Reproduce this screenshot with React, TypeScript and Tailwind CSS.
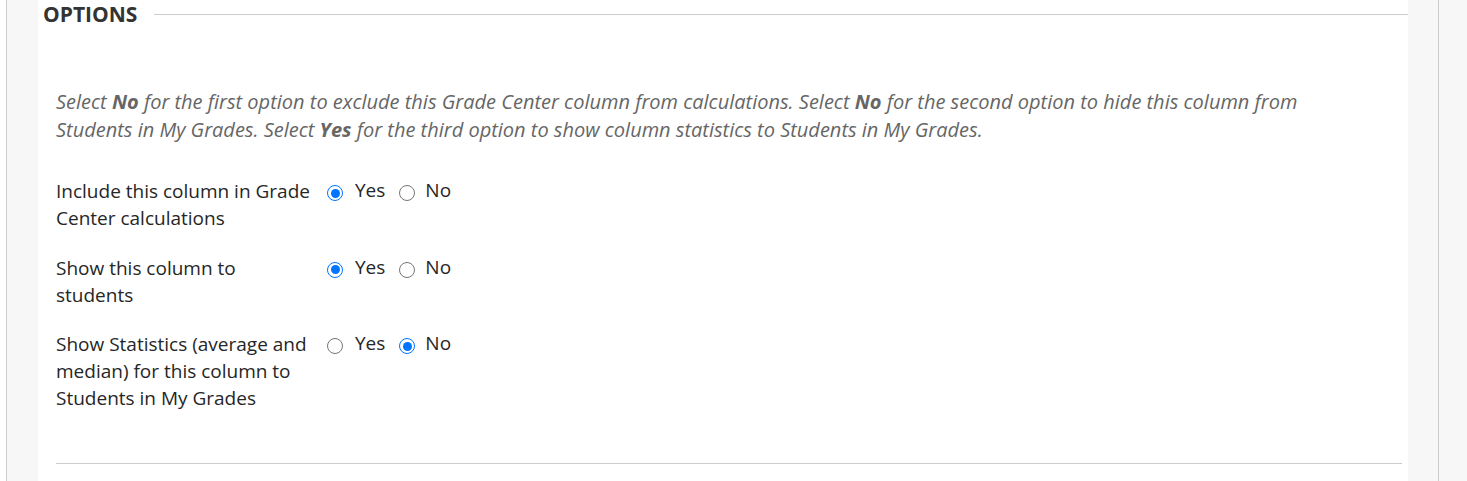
import React from "react";

const Radio = ({ checked }: { checked: boolean }) =>
  checked ? (
    <span className="flex h-[16px] w-[16px] shrink-0 items-center justify-center rounded-full border-[1.5px] border-[#0075ff] bg-white">
      <span className="h-[9px] w-[9px] rounded-full bg-[#0075ff]" />
    </span>
  ) : (
    <span className="block h-[16px] w-[16px] shrink-0 rounded-full border-[1.5px] border-[#767676] bg-white" />
  );

const rows = [
  { label: "Include this column in Grade Center calculations", yes: true },
  { label: "Show this column to students", yes: true },
  { label: "Show Statistics (average and median) for this column to Students in My Grades", yes: false },
];

export default function App() {
  return (
    <div className="flex h-[481px] w-full overflow-hidden bg-white font-['Open_Sans',sans-serif]">
      {/* left gutter */}
      <div className="ml-[6px] w-[32px] shrink-0 border-l border-[#cccccc] bg-[#f7f7f7]" />

      {/* panel */}
      <div className="flex w-[1370px] shrink-0 flex-col bg-white">
        <div className="flex h-[28px] items-center pl-[5px]">
          <h2 className="text-[21px] font-bold leading-[28px] text-[#333333]">OPTIONS</h2>
          <div className="ml-[17px] h-px flex-1 bg-[#cccccc]" />
        </div>

        <div className="flex flex-1 flex-col pl-[18px] pr-[6px]">
          <p className="mt-[60px] text-[20px] italic leading-[28px] text-[#666666]">
            Select <b>No</b> for the first option to exclude this Grade Center column from calculations. Select{" "}
            <b>No</b> for the second option to hide this column from
            <br />
            Students in My Grades. Select <b>Yes</b> for the third option to show column statistics to Students in
            My Grades.
          </p>

          <div className="mt-[34px] flex flex-col gap-[22.5px]">
            {rows.map((r) => (
              <div key={r.label} className="flex">
                <div className="w-[258px] shrink-0 text-[19px] leading-[27px] text-[#262626]">{r.label}</div>
                <div className="ml-[13px] flex h-[30px] items-center text-[19px] text-[#262626]">
                  <Radio checked={r.yes} />
                  <span className="ml-[12px] leading-[24px] -mt-[6px]">Yes</span>
                  <span className="ml-[14px]">
                    <Radio checked={!r.yes} />
                  </span>
                  <span className="ml-[10px] leading-[24px] -mt-[6px]">No</span>
                </div>
              </div>
            ))}
          </div>

          <div className="mt-[51px] h-px bg-[#cccccc]" />
        </div>
      </div>

      {/* right gutter */}
      <div className="w-[31px] shrink-0 border-r border-[#cccccc] bg-[#f7f7f7]" />
      <div className="flex-1 bg-[#f7f7f7]" />
    </div>
  );
}
